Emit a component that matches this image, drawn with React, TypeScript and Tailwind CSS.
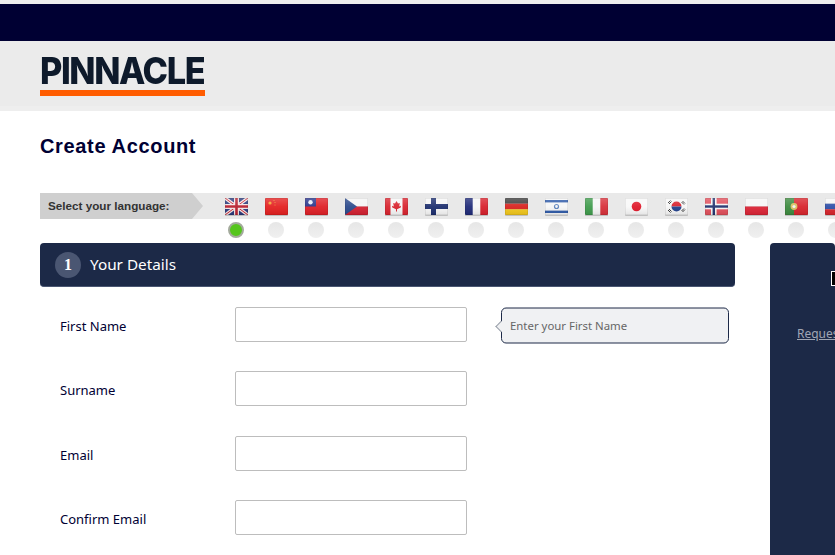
const flagW = "h-[17px] w-[23px] shrink-0 overflow-hidden rounded-[1px] drop-shadow-[0_1px_0_rgba(0,0,0,0.18)]";

function Flag({ children }: { children: React.ReactNode }) {
  return (
    <svg viewBox="0 0 23 17" className={flagW}>
      <defs>
        <linearGradient id="gloss" x1="0" y1="0" x2="0" y2="1">
          <stop offset="0" stopColor="#fff" stopOpacity="0.22" />
          <stop offset="0.5" stopColor="#fff" stopOpacity="0.06" />
          <stop offset="1" stopColor="#000" stopOpacity="0.08" />
        </linearGradient>
      </defs>
      {children}
      <rect width="23" height="17" fill="url(#gloss)" />
      <rect x="0" y="0" width="23" height="17" fill="none" stroke="#000" strokeOpacity="0.14" />
    </svg>
  );
}

const flags: React.ReactNode[] = [
  // uk
  <>
    <rect width="23" height="17" fill="#2b3a7c" />
    <path d="M0 0L23 17M23 0L0 17" stroke="#f4e6e6" strokeWidth="3.4" />
    <path d="M0 0L23 17M23 0L0 17" stroke="#c8202f" strokeWidth="1" />
    <path d="M11.5 0V17M0 8.5H23" stroke="#f4e6e6" strokeWidth="5" />
    <path d="M11.5 0V17M0 8.5H23" stroke="#b8202f" strokeWidth="2.6" />
  </>,
  // china
  <>
    <rect width="23" height="17" fill="#e42020" />
    <circle cx="5" cy="5" r="1.6" fill="#f0a030" />
    <circle cx="9" cy="2.5" r=".5" fill="#f0a030" />
    <circle cx="10" cy="4.5" r=".5" fill="#f0a030" />
    <circle cx="10" cy="7" r=".5" fill="#f0a030" />
  </>,
  // taiwan
  <>
    <rect width="23" height="17" fill="#df1f26" />
    <rect width="11" height="8.5" fill="#27348b" />
    <circle cx="5.5" cy="4.2" r="2.2" fill="#e8ecf8" />
  </>,
  // czech
  <>
    <rect width="23" height="8.5" fill="#f4f4f4" />
    <rect y="8.5" width="23" height="8.5" fill="#d32030" />
    <path d="M0 0L12 8.5L0 17Z" fill="#2b4a8c" />
  </>,
  // canada
  <>
    <rect width="23" height="17" fill="#f6f6f6" />
    <rect width="5.5" height="17" fill="#d9232e" />
    <rect x="17.5" width="5.5" height="17" fill="#d9232e" />
    <path d="M11.5 3L13 5.5L14.8 5L14.2 8.5L16 7.8L15.7 9.6L12 11.3V13.5H11V11.3L7.3 9.6L7 7.8L8.8 8.5L8.2 5L10 5.5Z" fill="#d9232e" />
  </>,
  // finland
  <>
    <rect width="23" height="17" fill="#f6f6f6" />
    <rect x="6" width="5" height="17" fill="#1d2f6f" />
    <rect y="6" width="23" height="5" fill="#1d2f6f" />
  </>,
  // france
  <>
    <rect width="23" height="17" fill="#f5f5f5" />
    <rect width="7.7" height="17" fill="#1f2a78" />
    <rect x="15.3" width="7.7" height="17" fill="#d8202c" />
  </>,
  // germany
  <>
    <rect width="23" height="5.7" fill="#3c3c3c" />
    <rect y="5.7" width="23" height="5.6" fill="#d8231f" />
    <rect y="11.3" width="23" height="5.7" fill="#f2c81c" />
  </>,
  // israel
  <>
    <rect width="23" height="17" fill="#f6f6f6" />
    <rect y="2" width="23" height="2.4" fill="#2e5aa8" />
    <rect y="12.6" width="23" height="2.4" fill="#2e5aa8" />
    <circle cx="11.5" cy="8.5" r="2" fill="none" stroke="#5d83bd" strokeWidth="1.2" />
  </>,
  // italy
  <>
    <rect width="23" height="17" fill="#f5f5f5" />
    <rect width="7.7" height="17" fill="#3f9b4c" />
    <rect x="15.3" width="7.7" height="17" fill="#d8303a" />
  </>,
  // japan
  <>
    <rect width="23" height="17" fill="#f8f8f8" />
    <circle cx="11.5" cy="8.5" r="4.8" fill="#e0182a" />
  </>,
  // korea
  <>
    <rect width="23" height="17" fill="#f6f6f6" />
    <path d="M6.5 8.5A5 5 0 0 1 16.5 8.5Z" fill="#d8202c" />
    <path d="M6.5 8.5A5 5 0 0 0 16.5 8.5Z" fill="#1f3f8c" />
    <path d="M3 5L5.5 2.5M4 6L6.5 3.5M17.5 3L20 5.5M16.5 4L19 6.5M3 12L5.5 14.5M4 11L6.5 13.5M17.5 14L20 11.5M16.5 13L19 10.5" stroke="#222" strokeWidth=".9" />
  </>,
  // norway
  <>
    <rect width="23" height="17" fill="#e2505c" />
    <rect x="6" width="5.6" height="17" fill="#f6f6f6" />
    <rect y="5.7" width="23" height="5.6" fill="#f6f6f6" />
    <rect x="7.6" width="2.4" height="17" fill="#22336f" />
    <rect y="7.3" width="23" height="2.4" fill="#22336f" />
  </>,
  // poland
  <>
    <rect width="23" height="8.5" fill="#f6f6f6" />
    <rect y="8.5" width="23" height="8.5" fill="#dc2436" />
  </>,
  // portugal
  <>
    <rect width="23" height="17" fill="#d8242c" />
    <rect width="9" height="17" fill="#3c8a3f" />
    <circle cx="9" cy="8.5" r="3.4" fill="#d8c060" />
    <circle cx="9" cy="8.5" r="1.6" fill="#f2f2f2" />
  </>,
  // russia
  <>
    <rect width="23" height="5.7" fill="#f6f6f6" />
    <rect y="5.7" width="23" height="5.6" fill="#2f4fa8" />
    <rect y="11.3" width="23" height="5.7" fill="#d8242c" />
  </>,
];

const fields = ["First Name", "Surname", "Email", "Confirm Email"];

export default function App() {
  return (
    <div className="h-[555px] w-[835px] overflow-hidden bg-white font-['Liberation_Sans',sans-serif]">
      <div className="h-1 bg-[#eeeeee]" />
      <div className="h-[37px] bg-[#000033]" />

      <header className="flex h-[70px] border-b-[5px] border-[#eeeeee] bg-[#ebebeb] pl-10 pt-[15px]">
        <div className="w-[165px]">
          <div className="h-[29px] origin-left scale-x-[0.927] font-['Inter',sans-serif] text-[37px] leading-[29px] font-extrabold tracking-[-1.5px] whitespace-nowrap text-[#0e1a2b]">
            PINNACLE
          </div>
          <div className="mt-[5px] h-[6px] bg-[#ff5c00]" />
        </div>
      </header>

      <h1 className="mt-[23px] pl-10 text-[20px] leading-6 font-bold tracking-[0.65px] text-[#000033]">
        Create Account
      </h1>

      <div className="mt-[35px] ml-10 flex h-[26px] bg-[#e9e9e9]">
        <div className="relative flex w-[152px] shrink-0 items-center bg-[#cfcfcf] pl-2 text-[11.7px] font-bold text-[#333]">
          Select your language:
          <span className="absolute top-0 left-full h-0 w-0 border-y-[13px] border-l-[11px] border-y-transparent border-l-[#cfcfcf]" />
        </div>
        <div className="ml-[33px] flex items-center gap-[17px]">
          {flags.map((f, i) => (
            <Flag key={i}>{f}</Flag>
          ))}
        </div>
      </div>

      <div className="mt-[3px] ml-[228px] flex h-[16px] items-center gap-[24px]">
        {flags.map((_, i) =>
          i === 0 ? (
            <span key={i} className="size-4 shrink-0 rounded-full border-2 border-[#a3aa9c] bg-[#55c51c]" />
          ) : (
            <span key={i} className="size-4 shrink-0 rounded-full bg-linear-to-b from-[#e6e6e6] to-[#f0f0f0]" />
          ),
        )}
      </div>

      <div className="mt-[5px] flex">
        <main className="ml-10 w-[695px] shrink-0">
          <div className="flex h-[44px] items-center rounded-[4px] border-b border-[#4a5672] bg-[#1c2947] pl-[15px] font-['Noto_Sans',sans-serif] text-white">
            <span className="flex size-[26px] items-center justify-center rounded-full bg-[#4a5672] font-['Liberation_Serif',serif] text-[16px] font-bold">
              1
            </span>
            <span className="ml-[9px] pb-[2px] text-[15.3px] leading-[20px]">Your Details</span>
          </div>

          <div className="mt-[20px] flex flex-col gap-[29.4px] pl-5 font-['Noto_Sans',sans-serif]">
            {fields.map((label, i) => (
              <div key={label} className="flex h-[35px] items-center">
                <label className="w-[175px] shrink-0 pt-[4px] text-[13px] text-[#000033]">{label}</label>
                <input className="h-[35px] w-[232px] rounded-[2px] border border-[#bdbdbd] bg-white" />
                {i === 0 && (
                  <div className="relative ml-[34px] flex h-[36px] w-[228px] translate-y-[0.5px] items-center rounded-[5px] border border-[#1c2947] bg-[#f0f1f3] pl-[8px] text-[11.4px] text-[#666]">
                    <span className="absolute top-[14px] -left-[5px] size-[8px] rotate-45 border-b border-l border-[#9aa0aa] bg-[#f0f1f3]" />
                    Enter your First Name
                  </div>
                )}
              </div>
            ))}
          </div>
        </main>

        <aside className="ml-[35px] h-[320px] w-[65px] shrink-0 overflow-hidden rounded-t-[4px] bg-[#1c2947] pl-[27px]">
          <span className="mt-[28px] ml-[34px] block h-[15px] w-[10px] border border-white bg-black" />
          <a className="mt-[39px] block whitespace-nowrap font-['Noto_Sans',sans-serif] text-[12px] text-[#a0a6b4] underline">
            Request
          </a>
        </aside>
      </div>
    </div>
  );
}
